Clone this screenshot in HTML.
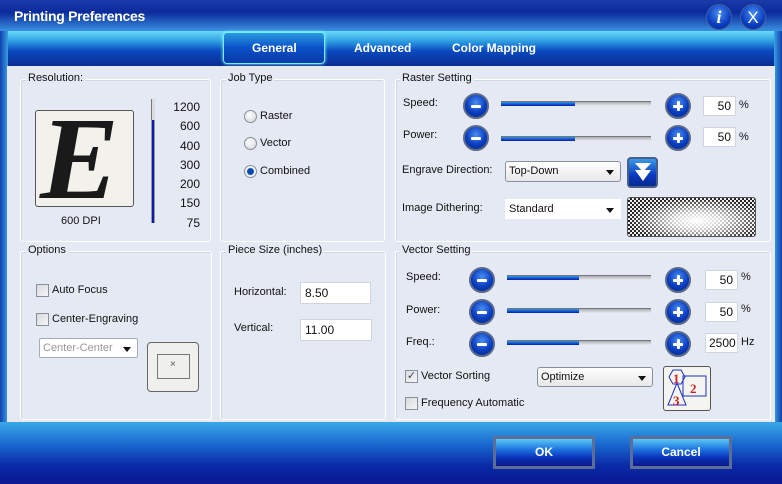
<!DOCTYPE html>
<html><head><meta charset="utf-8"><style>
*{box-sizing:border-box;margin:0;padding:0}
body{width:782px;height:484px;overflow:hidden;font-family:"Liberation Sans",Arial,sans-serif;font-size:11px;color:#111;position:relative;background:#1030b0}
.a{position:absolute}
.title{left:0;top:0;width:782px;height:31px;background:linear-gradient(#1a3aa8 0%,#0b2a9c 40%,#3a90e0 100%)}
.tabs{left:0;top:31px;width:782px;height:36px;background:linear-gradient(#6adaf8 0%,#2a9ae0 30%,#0a4ac0 55%,#0a2a90 100%)}
.side{top:31px;height:400px;width:8px;background:linear-gradient(90deg,#1040b0,#3aa0e0)}
.content{left:7px;top:66px;width:768px;height:357px;background:#e5e9f4}
.bottom{left:0;top:422px;width:782px;height:62px;background:linear-gradient(#3aa8e8 0%,#1a6ad0 35%,#0a2aa8 70%,#0a1890 100%)}
.grp{border:1px solid #fff;border-radius:3px;box-shadow:inset 1px 1px 0 #d0d6e4}
.lg{background:#e5e9f4;padding:0 2px;font-size:11px}
.tab{color:#fff;font-weight:bold;font-size:12px}
.rb{width:13px;height:13px;border-radius:50%;border:1px solid #8a8f99;background:radial-gradient(circle at 40% 35%,#fff,#cfd3d8)}
.cb{width:13px;height:13px;border:1px solid #8a8f99;background:linear-gradient(135deg,#d8dadf,#f6f6f6)}
.btn{width:26px;height:26px;border-radius:50%;background:radial-gradient(circle at 50% 35%,#4a8ef0 0%,#0a3cc0 55%,#062a80 100%);border:2px solid #5a6a88}
.btn i{position:absolute;left:6px;top:10px;width:10px;height:3px;background:#fff;border-radius:1px}
.btn b{position:absolute;left:10px;top:6px;width:3px;height:10px;background:#fff;border-radius:1px}
.trk{height:5px;background:linear-gradient(#a8acb4,#e8eaee);border-top:1px solid #777}
.trk span{display:block;height:4px;background:linear-gradient(#2a9ae8,#0a1ab0);width:50%}
.inp{background:#fff;border:1px solid #d0d4dc;font-size:12px;padding:3px 4px}
.dd{background:#fff;border:1px solid #8a8f99;font-size:11px;padding:3px 3px}
.dd:after{content:"";position:absolute;right:6px;top:8px;border:4px solid transparent;border-top:5px solid #111}
.bigbtn{width:102px;height:33px;border:3px solid #5a6e98;background:linear-gradient(#5ac8f4 0%,#1a70e0 40%,#0a30b8 70%,#0a1a8a 100%);color:#fff;font-weight:bold;font-size:12px;text-align:center;line-height:27px}
</style></head><body>
<div class="a title"></div>
<div class="a" style="left:14px;top:8px;color:#fff;font-size:14px;font-weight:bold;letter-spacing:-0.3px">Printing Preferences</div>
<div class="a" style="left:706px;top:4px;width:26px;height:26px;border-radius:50%;background:radial-gradient(circle at 50% 35%,#4a8ef0,#0a3cc0 60%,#062a80);border:1px solid #4060a0;color:#fff;font:italic bold 18px 'Liberation Serif',serif;text-align:center;line-height:25px">i</div>
<div class="a" style="left:740px;top:4px;width:26px;height:26px;border-radius:50%;background:radial-gradient(circle at 50% 35%,#4a8ef0,#0a3cc0 60%,#062a80);border:1px solid #4060a0;color:#fff;font-size:17px;text-align:center;line-height:25px">X</div>
<div class="a tabs"></div>
<div class="a side" style="left:0"></div>
<div class="a side" style="left:774px;background:linear-gradient(90deg,#3aa0e0,#1040b0)"></div>
<div class="a" style="left:223px;top:32px;width:102px;height:32px;border:1px solid #6ef0ff;border-radius:4px;background:linear-gradient(#2a9ae0,#0a50c8 50%,#0a3aa8);box-shadow:0 0 3px #8ff"></div>
<div class="a tab" style="left:252px;top:41px">General</div>
<div class="a tab" style="left:354px;top:41px">Advanced</div>
<div class="a tab" style="left:452px;top:41px">Color Mapping</div>
<div class="a content"></div>

<!-- Resolution -->
<div class="a grp" style="left:20px;top:79px;width:191px;height:163px"></div>
<div class="a lg" style="left:26px;top:72px">Resolution:</div>
<div class="a" style="left:35px;top:110px;width:99px;height:97px;border:1px solid #555;border-radius:3px;background:#f2f1ec;overflow:hidden"><div style="font:italic bold 118px 'Liberation Serif',serif;color:#1a1a1a;position:absolute;left:4px;top:-20px">E</div></div>
<div class="a" style="left:61px;top:215px">600 DPI</div>
<div class="a" style="left:151px;top:99px;width:4px;height:124px;background:#0a1ab0;border:1px solid #999;border-bottom:none"></div>
<div class="a" style="left:151px;top:99px;width:4px;height:21px;background:#ddd;border-left:1px solid #777"></div>
<div class="a" style="left:166px;top:98px;line-height:19.3px;text-align:right;width:34px;font-size:12px">1200<br>600<br>400<br>300<br>200<br>150<br>75</div>

<!-- Job type -->
<div class="a grp" style="left:220px;top:79px;width:165px;height:163px"></div>
<div class="a lg" style="left:226px;top:72px">Job Type</div>
<div class="a rb" style="left:244px;top:110px"></div><div class="a" style="left:260px;top:110px">Raster</div>
<div class="a rb" style="left:244px;top:137px"></div><div class="a" style="left:260px;top:137px">Vector</div>
<div class="a rb" style="left:244px;top:165px;background:radial-gradient(circle,#0a4ab0 0 3px,#fff 4px,#cfd3d8)"></div><div class="a" style="left:260px;top:165px">Combined</div>

<!-- Raster -->
<div class="a grp" style="left:395px;top:79px;width:376px;height:163px"></div>
<div class="a lg" style="left:400px;top:72px">Raster Setting</div>
<div class="a" style="left:403px;top:97px">Speed:</div>
<div class="a btn" style="left:463px;top:93px"><i></i></div>
<div class="a trk" style="left:501px;top:101px;width:150px"><span style="width:49%"></span></div>
<div class="a btn" style="left:665px;top:93px"><i></i><b></b></div>
<div class="a inp" style="left:703px;top:96px;width:33px;text-align:right;padding:2px 4px">50</div><div class="a" style="left:739px;top:99px">%</div>
<div class="a" style="left:403px;top:129px">Power:</div>
<div class="a btn" style="left:463px;top:125px"><i></i></div>
<div class="a trk" style="left:501px;top:136px;width:150px"><span style="width:49%"></span></div>
<div class="a btn" style="left:665px;top:125px"><i></i><b></b></div>
<div class="a inp" style="left:703px;top:127px;width:33px;text-align:right;padding:2px 4px">50</div><div class="a" style="left:739px;top:131px">%</div>
<div class="a" style="left:402px;top:164px">Engrave Direction:</div>
<div class="a dd" style="left:505px;top:161px;width:116px;height:21px;border-radius:3px;background:linear-gradient(#fff,#e8e8e8)">Top-Down</div>
<div class="a" style="left:627px;top:157px;width:31px;height:31px;border:2px solid #4a5e88;border-radius:4px;background:linear-gradient(#3a9ae8,#0a3ac0 60%,#082a90)"><div style="position:absolute;left:6px;top:4px;border:8px solid transparent;border-top:9px solid #fff;border-bottom:0"></div><div style="position:absolute;left:6px;top:11px;border:8px solid transparent;border-top:11px solid #fff;border-bottom:0"></div></div>
<div class="a" style="left:402px;top:202px">Image Dithering:</div>
<div class="a dd" style="left:505px;top:199px;width:116px;height:20px;border-color:#fff">Standard</div>
<div class="a" style="left:627px;top:197px;width:129px;height:40px;border:1px solid #555;border-radius:3px;background:radial-gradient(ellipse at 55% 60%,#fff 0%,rgba(255,255,255,.8) 25%,rgba(255,255,255,0) 70%),repeating-conic-gradient(#222 0 25%,#eee 0 50%) 0 0/4px 4px"></div>

<!-- Options -->
<div class="a grp" style="left:20px;top:251px;width:192px;height:169px"></div>
<div class="a lg" style="left:26px;top:244px">Options</div>
<div class="a cb" style="left:36px;top:284px"></div><div class="a" style="left:52px;top:284px">Auto Focus</div>
<div class="a cb" style="left:36px;top:313px"></div><div class="a" style="left:52px;top:313px">Center-Engraving</div>
<div class="a dd" style="left:39px;top:338px;width:99px;height:20px;border-color:#aab;color:#999;border-radius:2px">Center-Center</div>
<div class="a" style="left:147px;top:342px;width:52px;height:50px;border:1px solid #666;border-radius:4px;background:#efefeb"><div style="position:absolute;left:9px;top:11px;width:33px;height:25px;border:1px solid #777"></div><div style="position:absolute;left:22px;top:16px;font-size:10px;color:#555">×</div></div>

<!-- Piece size -->
<div class="a grp" style="left:220px;top:251px;width:166px;height:169px"></div>
<div class="a lg" style="left:226px;top:244px">Piece Size (inches)</div>
<div class="a" style="left:234px;top:286px">Horizontal:</div>
<div class="a inp" style="left:300px;top:282px;width:71px;height:22px">8.50</div>
<div class="a" style="left:234px;top:322px">Vertical:</div>
<div class="a inp" style="left:300px;top:319px;width:72px;height:22px">11.00</div>

<!-- Vector -->
<div class="a grp" style="left:395px;top:251px;width:376px;height:169px"></div>
<div class="a lg" style="left:400px;top:244px">Vector Setting</div>
<div class="a" style="left:406px;top:271px">Speed:</div>
<div class="a btn" style="left:469px;top:267px"><i></i></div>
<div class="a trk" style="left:507px;top:275px;width:144px"><span></span></div>
<div class="a btn" style="left:665px;top:267px"><i></i><b></b></div>
<div class="a inp" style="left:705px;top:270px;width:33px;text-align:right;padding:2px 4px">50</div><div class="a" style="left:741px;top:271px">%</div>
<div class="a" style="left:406px;top:304px">Power:</div>
<div class="a btn" style="left:469px;top:299px"><i></i></div>
<div class="a trk" style="left:507px;top:308px;width:144px"><span></span></div>
<div class="a btn" style="left:665px;top:299px"><i></i><b></b></div>
<div class="a inp" style="left:705px;top:302px;width:33px;text-align:right;padding:2px 4px">50</div><div class="a" style="left:741px;top:303px">%</div>
<div class="a" style="left:406px;top:336px">Freq.:</div>
<div class="a btn" style="left:469px;top:331px"><i></i></div>
<div class="a trk" style="left:507px;top:340px;width:144px"><span></span></div>
<div class="a btn" style="left:665px;top:331px"><i></i><b></b></div>
<div class="a inp" style="left:705px;top:333px;width:33px;text-align:right;padding:2px 3px">2500</div><div class="a" style="left:741px;top:336px">Hz</div>
<div class="a cb" style="left:405px;top:370px;font-size:11px;line-height:10px;color:#445;text-align:center">✓</div><div class="a" style="left:421px;top:370px">Vector Sorting</div>
<div class="a cb" style="left:405px;top:397px"></div><div class="a" style="left:421px;top:397px">Frequency Automatic</div>
<div class="a dd" style="left:537px;top:367px;width:116px;height:20px;border-radius:3px;background:linear-gradient(#fff,#e8e8e8)">Optimize</div>
<div class="a" style="left:663px;top:366px;width:48px;height:45px;border:1px solid #555;border-radius:3px;background:#f4f4f0">
<svg width="46" height="43" style="position:absolute;left:0;top:0"><polygon points="5,10 9,3 17,3 21,10 17,17 9,17" fill="none" stroke="#2030c0"/><rect x="19" y="9" width="23" height="20" fill="none" stroke="#2030c0"/><polygon points="13,16 4,38 22,38" fill="none" stroke="#2030c0"/><text x="9" y="16" fill="#d02020" font-family="Liberation Serif" font-size="13" font-weight="bold">1</text><text x="26" y="26" fill="#d02020" font-family="Liberation Serif" font-size="13" font-weight="bold">2</text><text x="9" y="38" fill="#d02020" font-family="Liberation Serif" font-size="13" font-weight="bold">3</text></svg></div>

<div class="a bottom"></div>
<div class="a bigbtn" style="left:493px;top:436px">OK</div>
<div class="a bigbtn" style="left:630px;top:436px">Cancel</div>
</body></html>
